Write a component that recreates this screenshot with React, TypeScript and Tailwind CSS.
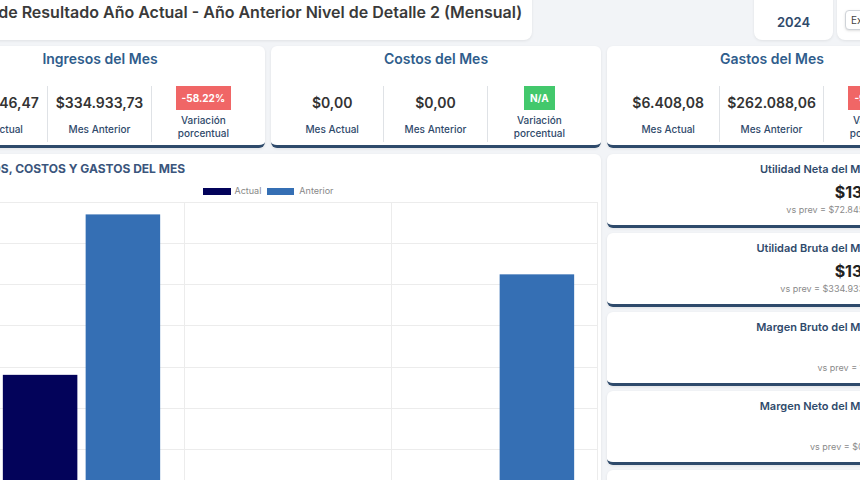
import React from 'react';

type Kpi = {
  title: string;
  actual: string;
  anterior: string;
  variation: string;
  tone: 'red' | 'green';
};

const kpis: Kpi[] = [
  { title: 'Ingresos del Mes', actual: '$139.946,47', anterior: '$334.933,73', variation: '-58.22%', tone: 'red' },
  { title: 'Costos del Mes', actual: '$0,00', anterior: '$0,00', variation: 'N/A', tone: 'green' },
  { title: 'Gastos del Mes', actual: '$6.408,08', anterior: '$262.088,06', variation: '-97.55%', tone: 'red' },
];

const summary = [
  { title: 'Utilidad Neta del Mes', value: '$133.538,39', prev: 'vs prev = $72.845,67' },
  { title: 'Utilidad Bruta del Mes', value: '$139.946,47', prev: 'vs prev = $334.933,73' },
  { title: 'Margen Bruto del Mes', value: '100%', prev: 'vs prev = 1,00' },
  { title: 'Margen Neto del Mes', value: '95%', prev: 'vs prev = $0,22' },
  { title: 'Gastos / Ingresos', value: '5%', prev: 'vs prev = $0,78' },
];

const chartData = [
  { label: 'Ingresos', actual: 139946.47, anterior: 334933.73 },
  { label: 'Costos', actual: 0, anterior: 0 },
  { label: 'Gastos', actual: 6408.08, anterior: 262088.06 },
];

function KpiCard({ kpi }: { kpi: Kpi }) {
  return (
    <div className="h-[102px] rounded-md border-b-[3px] border-[#2e4a6b] bg-white pt-[3px] shadow-[0_1px_3px_rgba(0,0,0,0.08)]">
      <div className="text-center text-[14px] font-semibold leading-5 text-[#2f5d8c]">{kpi.title}</div>
      <div className="mt-[17px] grid h-[56px] grid-cols-3 divide-x divide-[#dfe2e6] px-[10px]">
        <div className="flex flex-col items-center pt-[8px]">
          <div className="text-[14px] font-semibold leading-[18px] text-[#333]">{kpi.actual}</div>
          <div className="mt-[10px] text-[10px] font-medium leading-[14px] text-[#2f4a6b]">Mes Actual</div>
        </div>
        <div className="flex flex-col items-center pt-[8px]">
          <div className="text-[14px] font-semibold leading-[18px] text-[#333]">{kpi.anterior}</div>
          <div className="mt-[10px] text-[10px] font-medium leading-[14px] text-[#2f4a6b]">Mes Anterior</div>
        </div>
        <div className="flex flex-col items-center">
          <div
            className={
              kpi.tone === 'red'
                ? 'flex h-6 items-center bg-[#f06666] px-[6px] text-[10px] font-bold text-white'
                : 'flex h-6 items-center bg-[#43c86c] px-[6px] text-[10px] font-bold text-white'
            }
          >
            {kpi.variation}
          </div>
          <div className="mt-[4px] text-center text-[10px] font-medium leading-[13px] text-[#2f4a6b]">
            Variación
            <br />
            porcentual
          </div>
        </div>
      </div>
    </div>
  );
}

function BarChart() {
  const top = 2;
  const base = 290;
  const max = 350000;
  const left = 30;
  const cat = 207;
  const slot = cat * 0.8 / 2;
  const bar = slot * 0.9;
  const y = (v: number) => base - (v / max) * (base - top);

  return (
    <svg width="651" height="300" className="ml-3 mt-1 block">
      {Array.from({ length: 8 }).map((_, i) => {
        const gy = Math.round(top + ((base - top) / 7) * i) + 0.5;
        return <line key={i} x1={left - 6} x2={650} y1={gy} y2={gy} stroke="#ececec" />;
      })}
      {[0, 1, 2, 3].map((i) => {
        const gx = Math.min(left + cat * i, 650) + 0.5;
        return <line key={i} x1={gx} x2={gx} y1={top} y2={base} stroke="#ececec" />;
      })}
      {Array.from({ length: 8 }).map((_, i) => (
        <text
          key={i}
          x={left - 8}
          y={y(max - 50000 * i) + 3}
          textAnchor="end"
          fontSize="9"
          fill="#777"
        >
          {`$${((max - 50000 * i) / 1000).toFixed(0)}K`}
        </text>
      ))}
      {chartData.map((d, i) => {
        const c = left + cat * (i + 0.5);
        return (
          <g key={d.label}>
            <rect x={c - slot / 2 - bar / 2 + 1} y={y(d.actual)} width={bar} height={base - y(d.actual)} fill="#03035a" />
            <rect x={c + slot / 2 - bar / 2 + 1} y={y(d.anterior)} width={bar} height={base - y(d.anterior)} fill="#356fb4" />
          </g>
        );
      })}
    </svg>
  );
}

export default function App() {
  return (
    <div className="h-[480px] w-[860px] overflow-hidden bg-[#f2f4f7] font-['Inter',sans-serif]">
      <div className="-ml-[65px] w-[1002px]">
        <div className="-mt-[16px] flex h-[56px] items-stretch">
          <div className="-ml-1 rounded-lg bg-white px-[10px] py-4 shadow-[0_1px_3px_rgba(0,0,0,0.08)]">
            <h1 className="whitespace-nowrap text-[16px] font-semibold leading-6 text-[#3a3a3a]">
              Estado de Resultado Año Actual - Año Anterior Nivel de Detalle 2 (Mensual)
            </h1>
          </div>
          <div className="ml-auto flex w-[79px] flex-col items-center rounded-lg bg-white pt-[4px] shadow-[0_1px_3px_rgba(0,0,0,0.08)]">
            <div className="text-[9px] leading-3 text-[#999]">Año de análisis</div>
            <div className="mt-[13px] text-[13px] font-semibold leading-[18px] text-[#2f4a6b]">2024</div>
          </div>
          <div className="ml-[4px] w-[100px] rounded-lg bg-white px-[8px] pt-[26px] shadow-[0_1px_3px_rgba(0,0,0,0.08)]">
            <button className="flex h-5 items-center rounded border border-[#cfd3d8] bg-white px-[5px] text-[10px] text-[#444] shadow-sm">
              Exportar
            </button>
          </div>
        </div>

        <div className="mt-[6px] grid grid-cols-3 gap-[6px]">
          {kpis.map((k) => (
            <KpiCard key={k.title} kpi={k} />
          ))}
        </div>

        <div className="mt-[6px] grid grid-cols-3 gap-[6px]">
          <div className="col-span-2 h-[340px] rounded-md bg-white pt-[7px] shadow-[0_1px_3px_rgba(0,0,0,0.08)]">
            <div className="px-3 text-[12px] font-bold uppercase leading-4 text-[#3a557c]">
              Ingresos, costos y gastos del mes
            </div>
            <div className="mt-[9px] flex h-[10px] items-center justify-center text-[9px] text-[#888]">
              <span className="h-[7px] w-[28px] bg-[#03035a]" />
              <span className="ml-1">Actual</span>
              <span className="ml-[6px] h-[7px] w-[27px] bg-[#356fb4]" />
              <span className="ml-[5px]">Anterior</span>
            </div>
            <BarChart />
          </div>

          <div className="flex flex-col gap-[5px]">
            {summary.map((s) => (
              <div
                key={s.title}
                className="h-[74px] shrink-0 rounded-md border-b-[3px] border-[#2e4a6b] bg-white pt-[8px] text-right shadow-[0_1px_3px_rgba(0,0,0,0.08)]"
              >
                <div className="pr-[64px] text-[11px] font-semibold leading-[14px] text-[#2f4a6b]">{s.title}</div>
                <div className="mt-[6px] pr-[3px] text-[16px] font-bold leading-5 text-[#222]">{s.value}</div>
                <div className="mt-[2px] pr-[60px] text-[9px] leading-3 text-[#8a8a8a]">{s.prev}</div>
              </div>
            ))}
          </div>
        </div>
      </div>
    </div>
  );
}
